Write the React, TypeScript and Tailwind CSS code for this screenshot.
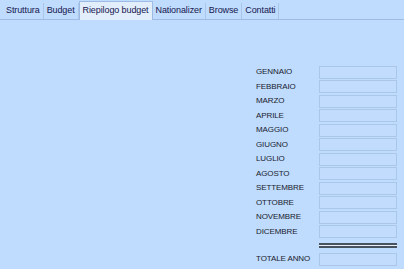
import React from "react"

const tabs = ["Struttura", "Budget", "Riepilogo budget", "Nationalizer", "Browse", "Contatti"]
const months = [
  "GENNAIO", "FEBBRAIO", "MARZO", "APRILE", "MAGGIO", "GIUGNO",
  "LUGLIO", "AGOSTO", "SETTEMBRE", "OTTOBRE", "NOVEMBRE", "DICEMBRE",
]

function Row({ label }: { label: string }) {
  return (
    <div className="flex h-[14.5px] items-center">
      <span className="w-[63px] text-[8px] tracking-[-0.1px] text-[#1a1c2e]">{label}</span>
      <div className="h-[13px] w-[78px] border border-[#abc7e8] bg-[#c1dcfc]" />
    </div>
  )
}

export default function App() {
  return (
    <div className="h-[269px] w-[404px] overflow-hidden bg-[#bfdbfd]" style={{ fontFamily: '"Liberation Sans", Arial, sans-serif' }}>
      <div className="flex h-[20px] items-end border-b border-[#9dbbe3] pl-[3px]">
        {tabs.map((t, i) =>
          i === 2 ? (
            <div key={i} className="-mb-px flex h-[19px] items-center border border-b-0 border-[#9dbbe3] bg-[#e3eefc] px-[3px] text-[9px] tracking-[-0.1px] text-[#15164f]">
              {t}
            </div>
          ) : (
            <div key={i} className="flex h-[16px] items-center border-r border-[#a9c5ea] px-[3px] text-[9px] tracking-[-0.1px] text-[#15164f]">
              {t}
            </div>
          )
        )}
      </div>
      <div className="flex justify-end pr-[7px] pt-[45px]">
        <div className="flex flex-col">
          {months.map((m) => (
            <Row key={m} label={m} />
          ))}
          <div className="flex h-[13px] items-center">
            <div className="w-[63px]" />
            <div className="flex w-[78px] flex-col">
              <div className="h-[1.5px] bg-[#48525e]" />
              <div className="h-[1.5px] bg-[#e6eef8]" />
              <div className="h-[1.5px] bg-[#48525e]" />
            </div>
          </div>
          <Row label="TOTALE ANNO" />
        </div>
      </div>
    </div>
  )
}
